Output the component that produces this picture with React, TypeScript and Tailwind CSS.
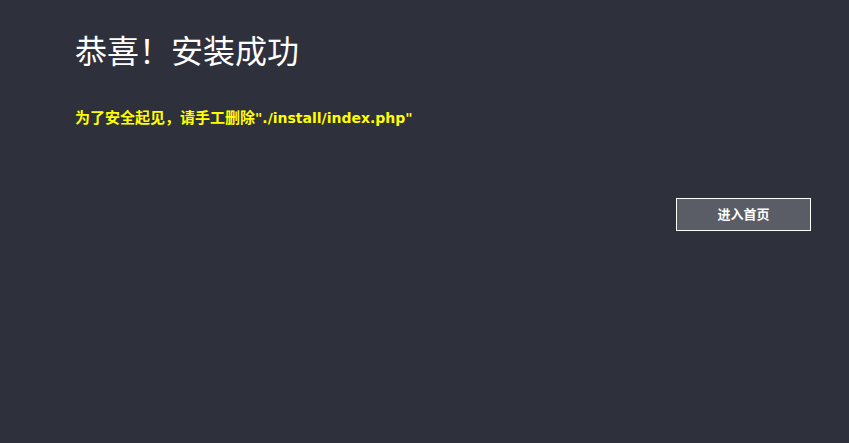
import React from 'react';

const font = '"Liberation Sans", "Noto Sans CJK SC", sans-serif';

export default function App() {
  return (
    <div
      className="min-h-[443px] w-full bg-[#2e303b] pl-[75px] pr-[38px] pt-[32px]"
      style={{ fontFamily: font }}
    >
      {/* Heading */}
      <h1 className="text-[32px] leading-[40px] text-white">恭喜！安装成功</h1>

      {/* Notice */}
      <p className="mt-[36px] text-[15px] leading-[20px] font-bold text-[#ffff00]">
        为了安全起见，请手工删除
        <span className="font-['DejaVu_Sans','Noto_Sans_CJK_SC',sans-serif] text-[14px]">"./install/index.php"</span>
      </p>

      {/* Actions */}
      <div className="mt-[70px] flex justify-end">
        <button className="h-[33px] w-[135px] border border-white bg-[#5a5d66] text-[13px] font-bold text-white">
          进入首页
        </button>
      </div>
    </div>
  );
}
